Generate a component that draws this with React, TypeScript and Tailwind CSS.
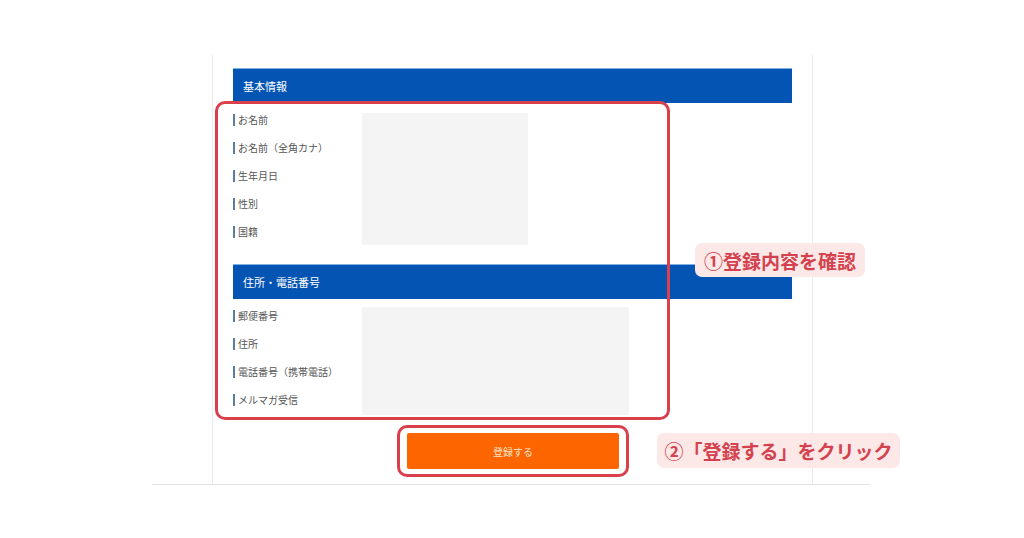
import React from "react";

const jp = { fontFamily: '"Noto Sans CJK JP", "Noto Sans", sans-serif' };

function Label({ text }: { text: string }) {
  return (
    <div className="h-[28px] flex items-center">
      <span className="w-[2px] h-[12px] bg-[#5b7ca6] mr-[3px]" />
      <span className="text-[10px] text-[#555555] leading-none">{text}</span>
    </div>
  );
}

export default function App() {
  const basic = ["お名前", "お名前（全角カナ）", "生年月日", "性別", "国籍"];
  const addr = ["郵便番号", "住所", "電話番号（携帯電話）", "メルマガ受信"];
  return (
    <div className="relative w-[1024px] h-[538px] bg-white overflow-hidden" style={jp}>
      <div className="pt-[55px]">
        <div className="ml-[212px] w-[601px] border-x border-[#ebebeb] pt-[13px] pb-[15px] pl-[20px]">
          <div className="w-[559px] h-[35px] bg-[#0454b4] border-t border-[#7fb0e6] flex items-center pl-[10px] text-white text-[11px]">
            基本情報
          </div>
          <div className="flex pt-[3px]">
            <div className="w-[129px] flex flex-col">
              {basic.map((t) => (
                <Label key={t} text={t} />
              ))}
            </div>
            <div className="mt-[7px] w-[166px] h-[132px] bg-[#f4f4f4]" />
          </div>
          <div className="mt-[18px] w-[559px] h-[35px] bg-[#0454b4] border-t border-[#7fb0e6] flex items-center pl-[10px] text-white text-[11px]">
            住所・電話番号
          </div>
          <div className="flex pt-[3px]">
            <div className="w-[129px] flex flex-col">
              {addr.map((t) => (
                <Label key={t} text={t} />
              ))}
            </div>
            <div className="mt-[5px] w-[267px] h-[108px] bg-[#f4f4f4]" />
          </div>
          <div className="mt-[18px] ml-[174px] w-[212px] h-[36px] bg-[#fd6500] rounded-[2px] flex items-center justify-center text-[10px] text-[#ffe3cc]">
            登録する
          </div>
        </div>
        <div className="ml-[152px] w-[718px] h-px bg-[#e2e2e2]" />
      </div>

      <div className="absolute left-[215px] top-[101px] w-[455px] h-[319px] border-[3px] border-[#d9404c] rounded-[10px]" />
      <div className="absolute left-[397px] top-[425px] w-[232px] h-[52px] border-[3px] border-[#d9404c] rounded-[10px]" />

      <div className="absolute left-[695px] top-[243px] w-[170px] h-[34px] rounded-[7px] bg-[#fde8e8] flex items-center justify-center text-[19px] font-bold text-[#d3424e] leading-none">
        ①登録内容を確認
      </div>
      <div className="absolute left-[657px] top-[433px] w-[243px] h-[35px] rounded-[7px] bg-[#fde8e8] flex items-center justify-center text-[19px] font-bold text-[#d3424e] leading-none">
        ②「登録する」をクリック
      </div>
    </div>
  );
}
